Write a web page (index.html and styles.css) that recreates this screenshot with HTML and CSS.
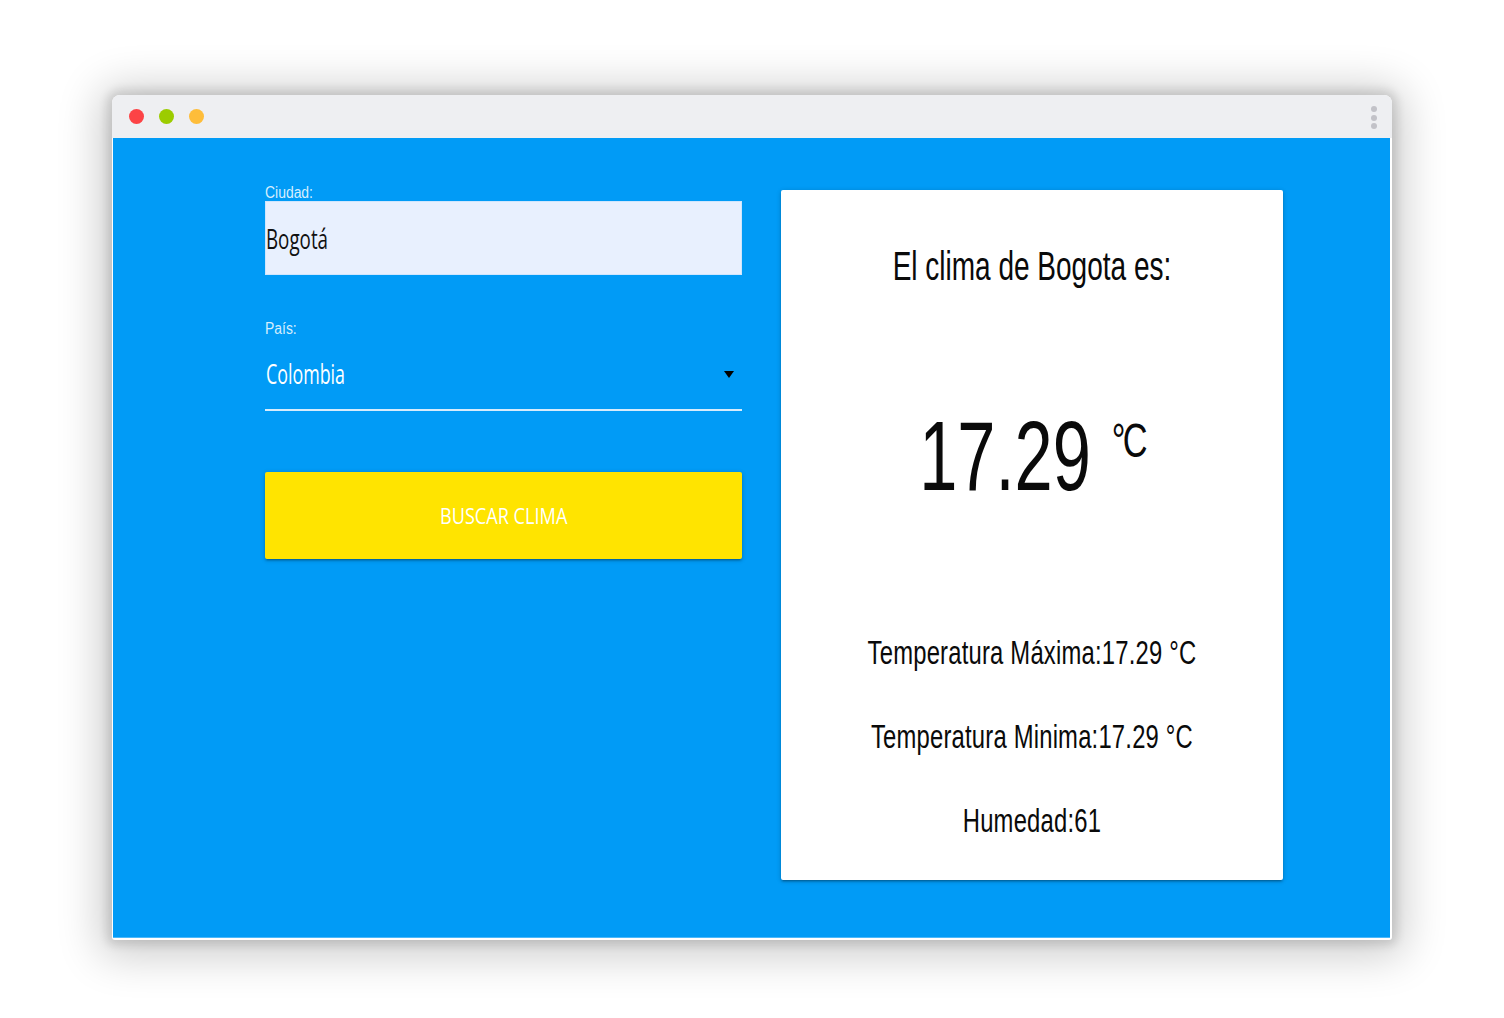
FILE: index.html
```html
<!DOCTYPE html>
<html lang="es">
<head>
<meta charset="utf-8">
<title>Clima</title>
<link rel="stylesheet" href="styles.css">
</head>
<body>
<div class="window">
  <div class="titlebar">
    <div class="lights">
      <span class="light red"></span>
      <span class="light green"></span>
      <span class="light yellow"></span>
    </div>
    <div class="kebab"><span></span><span></span><span></span></div>
  </div>
  <div class="content">
    <form class="form">
      <div class="label"><span class="sx sx-label">Ciudad:</span></div>
      <div class="input"><span class="sx sx-input">Bogotá</span></div>
      <div class="label label-pais"><span class="sx sx-label">País:</span></div>
      <div class="select">
        <span class="sx sx-select">Colombia</span>
        <span class="caret"></span>
      </div>
      <div class="btn"><span class="sx sx-btn">BUSCAR CLIMA</span></div>
    </form>
    <div class="card">
      <div class="card-inner">
        <div class="title">El clima de Bogota es:</div>
        <div class="temp">
          <span class="temp-num">17.29</span>
          <span class="temp-unit">°C</span>
        </div>
        <div class="details">
          <div class="detail">Temperatura Máxima:17.29 °C</div>
          <div class="detail">Temperatura Minima:17.29 °C</div>
          <div class="detail">Humedad:61</div>
        </div>
      </div>
    </div>
  </div>
</div>
</body>
</html>
```

FILE: styles.css
```css
* { box-sizing: border-box; }

html, body {
  margin: 0;
  padding: 0;
  background: #ffffff;
}

body {
  font-family: "Liberation Sans", Arial, sans-serif;
  overflow: hidden;
  height: 1018px;
}

.window {
  width: 1280px;
  height: 845px;
  margin: 95px 0 0 112px;
  background: #ffffff;
  border-radius: 8px 8px 3px 3px;
  box-shadow: 0 0 10px 5px rgba(0, 0, 0, 0.12), 0 4px 44px 12px rgba(0, 0, 0, 0.2);
  display: flex;
  flex-direction: column;
}

.titlebar {
  height: 43px;
  background: #eeeff2;
  border-radius: 8px 8px 0 0;
  display: flex;
  align-items: center;
  justify-content: space-between;
  padding: 0 15px 0 17px;
}

.lights {
  display: flex;
  gap: 15px;
}

.light {
  width: 15px;
  height: 15px;
  border-radius: 50%;
  display: block;
}
.red { background: #fc4346; }
.green { background: #9ccc00; }
.yellow { background: #febd3a; }

.kebab {
  display: flex;
  flex-direction: column;
  gap: 2.5px;
  margin-top: 2px;
}
.kebab span {
  width: 6px;
  height: 6px;
  border-radius: 50%;
  background: #c2c2c8;
  display: block;
}

.content {
  flex: 1;
  margin: 0 2px 2px 1px;
  background: #019bf6;
  border-bottom: 1px solid #4cb8fa;
  display: flex;
  align-items: flex-start;
  padding: 46px 0 0 152px;
  gap: 39px;
}

.sx {
  display: inline-block;
  white-space: nowrap;
}

.form {
  width: 477px;
  margin: 0;
}

.label {
  height: 17px;
  font-size: 16px;
  line-height: 17px;
  color: #d6eefd;
}
.sx-label {
  transform: scaleX(0.87);
  transform-origin: 0 50%;
}

.label-pais {
  margin-top: 45px;
}

.input {
  height: 74px;
  background: #e8f0fe;
  border: 1px solid #cfe6fd;
  display: flex;
  align-items: center;
  font-family: "Open Sans", "Noto Sans", sans-serif;
  font-size: 28px;
  color: #111111;
}
.sx-input {
  transform: scaleX(0.67);
  transform-origin: 0 50%;
}

.select {
  height: 74px;
  border-bottom: 2px solid #d6ecfc;
  display: flex;
  align-items: center;
  justify-content: space-between;
  padding-right: 8px;
  font-family: "Open Sans", "Noto Sans", sans-serif;
  font-size: 27px;
  color: #ffffff;
}
.sx-select {
  transform: scaleX(0.66);
  transform-origin: 0 50%;
  margin-left: 1px;
}

.caret {
  width: 0;
  height: 0;
  border-left: 5.5px solid transparent;
  border-right: 5.5px solid transparent;
  border-top: 7px solid #000000;
  margin-top: 2px;
}

.btn {
  margin-top: 61px;
  height: 87px;
  background: #ffe400;
  border-radius: 2px;
  box-shadow: 0 2px 2px 0 rgba(0, 0, 0, 0.14), 0 3px 1px -2px rgba(0, 0, 0, 0.12), 0 1px 5px 0 rgba(0, 0, 0, 0.2);
  display: flex;
  align-items: center;
  justify-content: center;
  font-family: "Open Sans", "Noto Sans", sans-serif;
  font-size: 22.4px;
  color: #ffffff;
}
.sx-btn {
  transform: scaleX(0.81);
  transform-origin: 50% 50%;
}

.card {
  width: 502px;
  height: 690px;
  margin-top: 6px;
  background: #ffffff;
  border-radius: 2px;
  box-shadow: 0 2px 2px 0 rgba(0, 0, 0, 0.14), 0 3px 1px -2px rgba(0, 0, 0, 0.12), 0 1px 5px 0 rgba(0, 0, 0, 0.2);
}

.card-inner {
  width: 717px;
  transform: scaleX(0.7);
  transform-origin: 0 0;
  padding-top: 53px;
  text-align: center;
  color: #0a0a0a;
}

.title {
  font-size: 40px;
  line-height: 46px;
  white-space: nowrap;
}

.temp {
  margin-top: 118px;
  display: flex;
  justify-content: center;
  align-items: flex-start;
}

.temp-num {
  font-size: 98px;
  line-height: 98px;
}

.temp-unit {
  font-size: 49px;
  line-height: 66px;
  margin-left: 30px;
  letter-spacing: -4px;
}

.details {
  margin-top: 105px;
}

.detail {
  font-size: 34px;
  line-height: 84px;
  letter-spacing: 0.3px;
  white-space: nowrap;
}
```
